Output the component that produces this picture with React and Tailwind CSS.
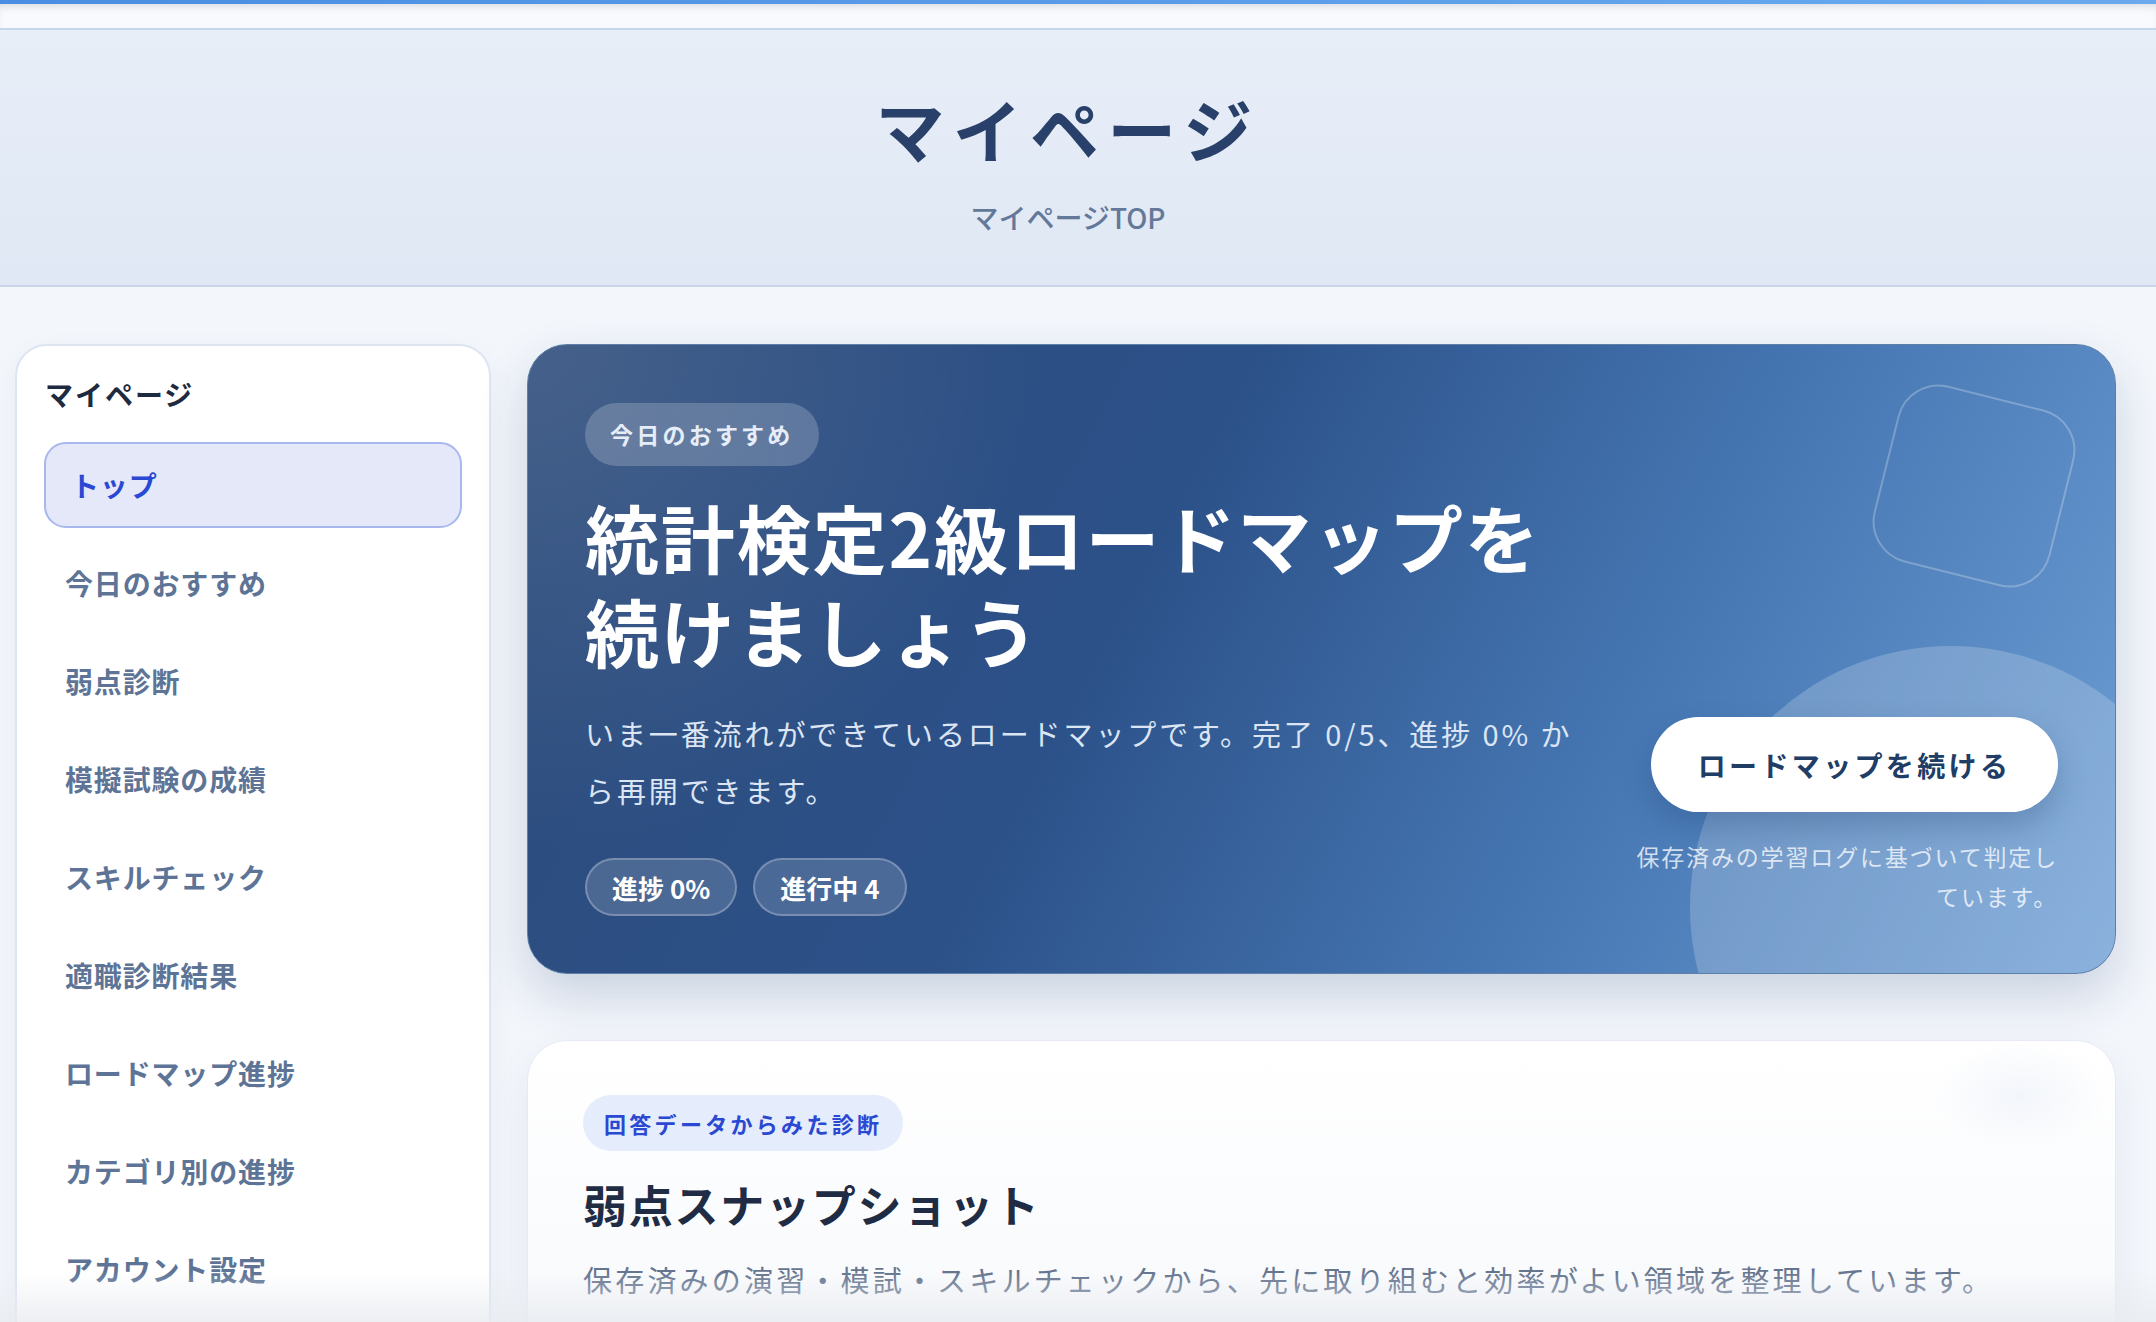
import React from "react";

const navItems = [
  "今日のおすすめ",
  "弱点診断",
  "模擬試験の成績",
  "スキルチェック",
  "適職診断結果",
  "ロードマップ進捗",
  "カテゴリ別の進捗",
  "アカウント設定",
];

export default function App() {
  return (
    <div className="relative h-[1322px] overflow-hidden bg-[#f3f6fb] font-['Noto_Sans_CJK_JP','Noto_Sans',sans-serif]">
      {/* top strip */}
      <div className="h-[4px] bg-gradient-to-r from-[#4a8de2] to-[#6aa9ef]" />
      <div className="h-[24px] bg-[#f8fafd] shadow-[inset_0_6px_8px_-4px_rgba(60,70,90,0.18)]" />

      {/* page header */}
      <header className="flex h-[259px] flex-col items-center border-y-2 border-[#c9d6e9] bg-gradient-to-b from-[#e8eef8] to-[#dfe8f4] pr-[20px] pt-[64px]">
        <h1 className="text-[69px] font-bold leading-none tracking-[0.12em] text-[#29416a]">
          マイページ
        </h1>
        <p className="mt-[40px] text-[28px] font-medium leading-none text-[#64789a]">
          マイページTOP
        </p>
      </header>

      {/* body */}
      <div className="flex items-start gap-[36px] pl-[15px] pr-[40px] pt-[57px]">
        {/* sidebar */}
        <aside className="w-[476px] shrink-0 rounded-[32px] border-2 border-[#dde5f1] bg-white px-[27px] pb-[40px] pt-[30px] shadow-[0_10px_30px_rgba(40,70,120,0.05)]">
          <div className="pl-[1px] text-[28px] font-bold leading-[36px] tracking-[0.07em] text-[#1e2a3f]">
            マイページ
          </div>
          <nav className="mt-[30px] flex flex-col gap-[12px]">
            <div className="flex h-[86px] items-center rounded-[22px] border-2 border-[#a8b8ef] bg-[#e4e8f9] pl-[25px] text-[28px] font-bold tracking-[0.03em] text-[#2a48d2]">
              トップ
            </div>
            {navItems.map((item) => (
              <div
                key={item}
                className="flex h-[86px] items-center rounded-[22px] border-2 border-transparent pl-[19px] text-[28px] font-bold tracking-[0.03em] text-[#5e7496]"
              >
                {item}
              </div>
            ))}
          </nav>
        </aside>

        {/* main column */}
        <main className="flex min-w-0 flex-1 flex-col gap-[66px]">
          {/* hero card */}
          <section className="relative h-[630px] overflow-hidden rounded-[40px] border border-[#5d7fa8] bg-[radial-gradient(circle_at_0%_0%,rgba(255,255,255,0.12),transparent_30%),linear-gradient(118deg,#2c4b7a_0%,#2c5189_38%,#4677b3_68%,#6e9fd5_100%)] shadow-[0_22px_50px_rgba(35,70,120,0.2)]">
            {/* decorations */}
            <div className="absolute left-[1355px] top-[50px] h-[182px] w-[182px] rotate-[14deg] rounded-[42px] border-2 border-white/25" />
            <div className="absolute left-[1162px] top-[301px] h-[522px] w-[522px] rounded-full bg-white/20" />

            <div className="relative flex h-full items-end justify-between px-[57px] pb-[57px] pt-[57px]">
              <div className="flex flex-col items-start">
                <span className="flex h-[63px] items-center rounded-full bg-white/20 px-[25px] text-[23px] font-bold tracking-[0.14em] text-[#e6edf8]">
                  今日のおすすめ
                </span>
                <h2 className="mt-[23px] text-[74px] font-bold leading-[94px] tracking-[0.025em] text-white">
                  統計検定2級ロードマップを
                  <br />
                  続けましょう
                </h2>
                <p className="mt-[28px] text-[29px] leading-[57px] tracking-[0.1em] text-[#dbe5f4]">
                  いま一番流れができているロードマップです。完了 0/5、進捗 0% か
                  <br />
                  ら再開できます。
                </p>
                <div className="mt-[39px] flex gap-[16px]">
                  <span className="flex h-[58px] items-center rounded-full border-2 border-white/25 bg-white/15 px-[25px] text-[26px] font-bold text-white">
                    進捗 0%
                  </span>
                  <span className="flex h-[58px] items-center rounded-full border-2 border-white/25 bg-white/15 px-[25px] text-[26px] font-bold text-white">
                    進行中 4
                  </span>
                </div>
              </div>

              <div className="flex w-[425px] shrink-0 flex-col items-end">
                <button className="flex h-[95px] w-[407px] items-center justify-center rounded-full bg-white text-[28px] font-bold tracking-[0.12em] text-[#203d66] shadow-[0_14px_30px_rgba(20,50,100,0.25)]">
                  ロードマップを続ける
                </button>
                <p className="mt-[24px] text-right text-[23px] leading-[40px] tracking-[0.08em] text-white/75">
                  保存済みの学習ログに基づいて判定し
                  <br />
                  ています。
                </p>
              </div>
            </div>
          </section>

          {/* weakness card */}
          <section className="relative overflow-hidden rounded-[40px] border border-[#e6ebf3] bg-gradient-to-b from-white to-[#f7f9fc] px-[55px] pb-[60px] pt-[54px] shadow-[0_16px_40px_rgba(40,70,120,0.07)]">
            <div className="absolute right-[10px] top-[0px] h-[110px] w-[170px] rounded-full bg-[radial-gradient(closest-side,rgba(235,240,248,0.6),transparent)]" />
            <span className="inline-flex h-[56px] items-center rounded-full bg-[#e5ecfb] px-[21px] text-[22px] font-bold tracking-[0.15em] text-[#2a48d2]">
              回答データからみた診断
            </span>
            <h3 className="mt-[25px] text-[44px] font-bold leading-[56px] tracking-[0.04em] text-[#1f2c44]">
              弱点スナップショット
            </h3>
            <p className="mt-[25px] text-[29px] leading-[44px] tracking-[0.11em] text-[#66758f]">
              保存済みの演習・模試・スキルチェックから、先に取り組むと効率がよい領域を整理しています。
            </p>
          </section>
        </main>
      </div>

      {/* bottom fade */}
      <div className="pointer-events-none absolute inset-x-0 bottom-0 h-[50px] bg-gradient-to-b from-transparent to-[#e8ebf0]/80" />
    </div>
  );
}
